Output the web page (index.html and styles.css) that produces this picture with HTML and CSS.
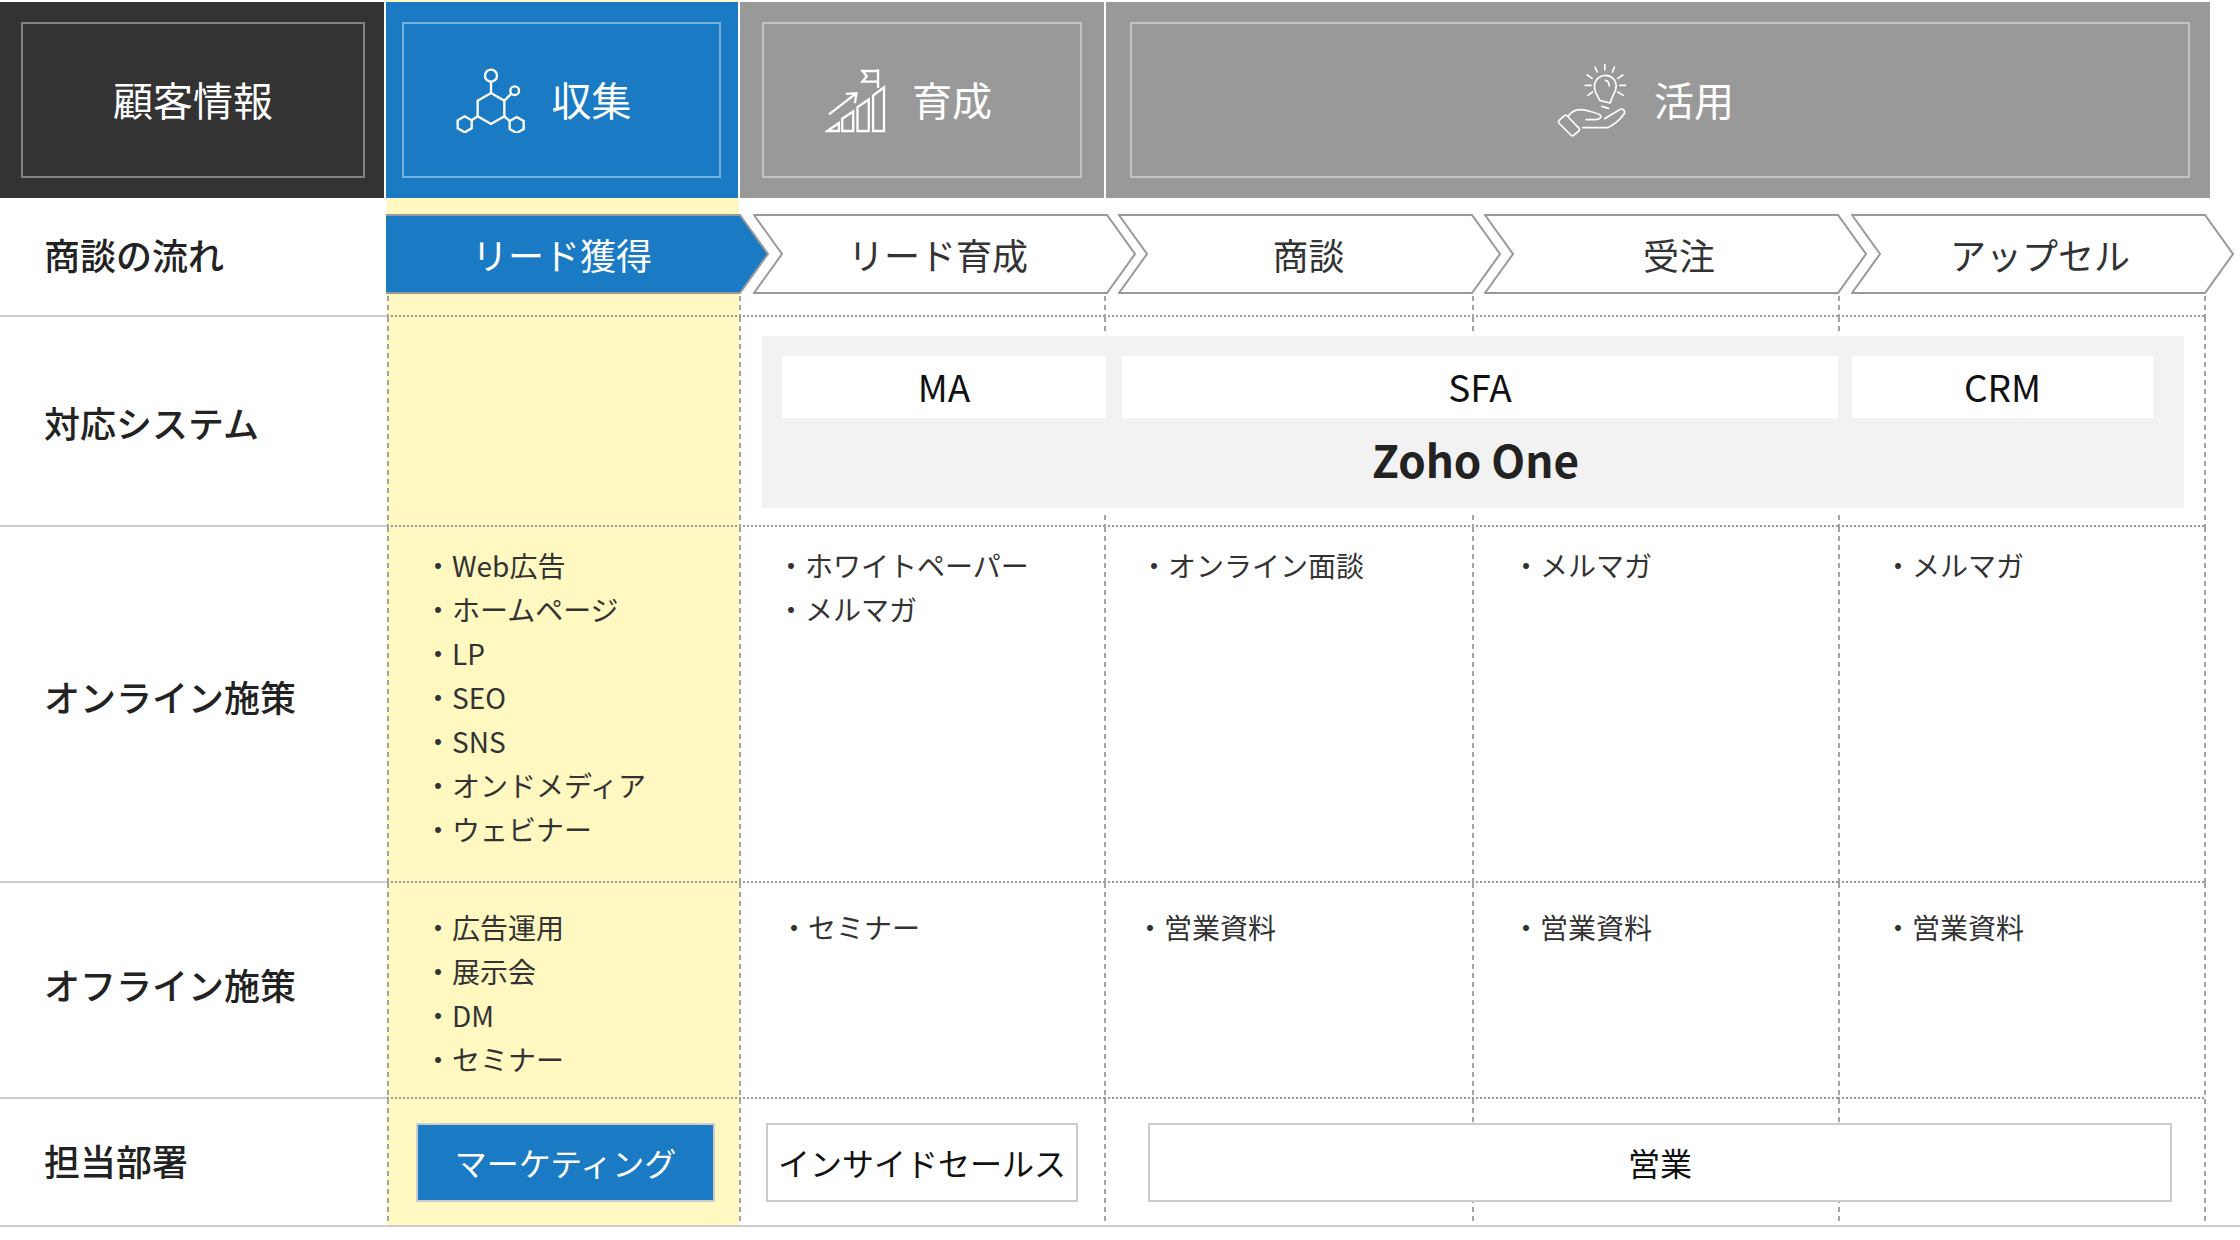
FILE: index.html
```html
<!DOCTYPE html>
<html lang="ja">
<head>
<meta charset="utf-8">
<title>顧客情報</title>
<link rel="stylesheet" href="styles.css">
</head>
<body>
<main class="page">
  <header class="stages">
    <div class="stage stage-dark"><div class="stage-box"><span class="stage-text">顧客情報</span></div></div>
    <div class="stage stage-blue"><div class="stage-box stage-box-icon">
      <svg class="icon icon-molecule" viewBox="45 50 210 195" aria-hidden="true">
        <path d="M150 125 190 148V195L150 218 110 195V148Z"/>
        <circle cx="150" cy="73" r="18"/><path d="M150 92V125"/>
        <circle cx="221" cy="118" r="13"/><path d="M190 148 211 127"/>
        <path d="M71 195 92 207V231L71 243 50 231V207ZM92 207 110 195"/>
        <path d="M227 197 248 209V233L227 245 206 233V209ZM206 209 190 195"/>
      </svg>
      <span class="stage-text">収集</span></div></div>
    <div class="stage stage-gray stage-nurture"><div class="stage-box stage-box-icon">
      <svg class="icon icon-chart" viewBox="40 50 190 200" aria-hidden="true">
        <path d="M200 56V112M200 61H153L166 77 153 93H200"/>
        <path d="M47 242 82 218V242ZM92 242V205L125 183V242ZM138 242V170L172 147V242ZM185 242V135L218 110V242Z"/>
        <path d="M52 192 135 128M103 130 135 128 130 158"/>
      </svg>
      <span class="stage-text">育成</span></div></div>
    <div class="stage stage-gray stage-use"><div class="stage-box stage-box-icon">
      <svg class="icon icon-hand" viewBox="35 38 215 225" aria-hidden="true">
        <path d="M165 150C160 135 148 125 150 105 152 85 168 75 183 75 200 75 215 88 215 108 215 125 203 135 197 158ZM183 90C190 92 194 98 194 106M172 168 192 174"/>
        <path d="M181 43V58M152 50 158 65M210 50 204 65M128 74 143 84M235 74 220 84M122 105H140M243 105H226M130 135 144 125M236 135 220 125"/>
        <path d="M44 210 60 196Q64 193 68 197L104 234Q107 238 103 242L87 255Q83 258 79 254L43 218Q40 214 44 210Z"/>
        <path d="M72 196C85 178 105 175 125 180 140 185 160 187 168 195 172 205 160 208 150 208H125M180 205 225 178C235 172 245 182 238 192 225 210 205 225 190 232H115"/>
      </svg>
      <span class="stage-text">活用</span></div></div>
  </header>

  <section class="row row-flow">
    <div class="label label-flow">商談の流れ</div>
    <div class="flow-tint"></div>
    <div class="arrows">
      <div class="arrow arrow-lead">
        <svg class="arrow-shape" viewBox="0 0 384 80" aria-hidden="true"><polygon class="arrow-fill" points="0,1 354,1 382,40 354,79 0,79"/><polyline class="arrow-line" points="0,1 354,1 382,40 354,79 0,79"/></svg>
        <span class="arrow-text">リード獲得</span>
      </div>
      <div class="arrow arrow-nurture">
        <svg class="arrow-shape" viewBox="0 0 384 80" aria-hidden="true"><polygon class="arrow-line" points="1,1 354,1 382,40 354,79 1,79 29,40"/></svg>
        <span class="arrow-text">リード育成</span>
      </div>
      <div class="arrow arrow-talk">
        <svg class="arrow-shape" viewBox="0 0 384 80" aria-hidden="true"><polygon class="arrow-line" points="1,1 354,1 382,40 354,79 1,79 29,40"/></svg>
        <span class="arrow-text">商談</span>
      </div>
      <div class="arrow arrow-order">
        <svg class="arrow-shape" viewBox="0 0 384 80" aria-hidden="true"><polygon class="arrow-line" points="1,1 354,1 382,40 354,79 1,79 29,40"/></svg>
        <span class="arrow-text">受注</span>
      </div>
      <div class="arrow arrow-upsell">
        <svg class="arrow-shape" viewBox="0 0 384 80" aria-hidden="true"><polygon class="arrow-line" points="1,1 354,1 382,40 354,79 1,79 29,40"/></svg>
        <span class="arrow-text">アップセル</span>
      </div>
    </div>
    <div class="cell c1 tint"></div><div class="cell c2"></div><div class="cell c3"></div><div class="cell c4"></div><div class="cell c5"></div>
  </section>

  <section class="row row-system">
    <div class="label">対応システム</div>
    <div class="cell c1 tint"></div><div class="cell c2"></div><div class="cell c3"></div><div class="cell c4"></div><div class="cell c5"></div>
    <div class="panel">
      <div class="tabs">
        <div class="tab tab-ma">MA</div>
        <div class="tab tab-sfa">SFA</div>
        <div class="tab tab-crm">CRM</div>
      </div>
      <div class="panel-title">Zoho One</div>
    </div>
  </section>

  <section class="row row-online">
    <div class="label">オンライン施策</div>
    <ul class="cell c1 tint list">
      <li>・Web広告</li><li>・ホームページ</li><li>・LP</li><li>・SEO</li><li>・SNS</li><li>・オンドメディア</li><li>・ウェビナー</li>
    </ul>
    <ul class="cell c2 list"><li>・ホワイトペーパー</li><li>・メルマガ</li></ul>
    <ul class="cell c3 list"><li>・オンライン面談</li></ul>
    <ul class="cell c4 list"><li>・メルマガ</li></ul>
    <ul class="cell c5 list"><li>・メルマガ</li></ul>
  </section>

  <section class="row row-offline">
    <div class="label">オフライン施策</div>
    <ul class="cell c1 tint list"><li>・広告運用</li><li>・展示会</li><li>・DM</li><li>・セミナー</li></ul>
    <ul class="cell c2 list"><li>・セミナー</li></ul>
    <ul class="cell c3 list"><li>・営業資料</li></ul>
    <ul class="cell c4 list"><li>・営業資料</li></ul>
    <ul class="cell c5 list"><li>・営業資料</li></ul>
  </section>

  <section class="row row-owner">
    <div class="label">担当部署</div>
    <div class="cell c1 tint"></div><div class="cell c2"></div><div class="cell c3"></div><div class="cell c4"></div><div class="cell c5"></div>
    <div class="owner owner-marketing">マーケティング</div>
    <div class="owner owner-inside">インサイドセールス</div>
    <div class="owner owner-sales">営業</div>
  </section>
</main>
</body>
</html>
```

FILE: styles.css
```css
* {
  box-sizing: border-box;
}

html,
body {
  margin: 0;
  padding: 0;
  background: #fff;
}

body {
  font-family: "Noto Sans CJK JP", "Noto Sans", sans-serif;
  color: #333;
}

.page {
  width: 2240px;
  height: 1240px;
  overflow: hidden;
}

/* Stage header */
.stages {
  display: flex;
  gap: 2px;
  width: 2210px;
  height: 198px;
  padding-top: 2px;
}

.stage {
  display: flex;
  height: 196px;
  padding-top: 20px;
  padding-bottom: 20px;
}

.stage-dark {
  width: 384px;
  padding-left: 21px;
  padding-right: 19px;
  background: #333;
}

.stage-blue {
  width: 352px;
  padding-left: 16px;
  padding-right: 17px;
  background: #1a7ac4;
  position: relative;
}

.stage-blue::before {
  content: "";
  position: absolute;
  left: 0;
  right: 0;
  top: -2px;
  height: 2px;
  background: #fff8c0;
}

.stage-gray {
  background: #999;
}

.stage-nurture {
  width: 364px;
  padding-left: 22px;
  padding-right: 22px;
}

.stage-use {
  flex: 1;
  padding-left: 24px;
  padding-right: 20px;
}

.stage-box {
  flex: 1;
  display: flex;
  align-items: center;
  justify-content: center;
  border: 2px solid rgba(255, 255, 255, 0.4);
}

.stage-box-icon {
  gap: 26px;
  padding-right: 36px;
}

.stage-nurture .stage-box-icon {
  gap: 24px;
  padding-right: 27px;
}

.stage-use .stage-box-icon {
  padding-right: 30px;
}

.stage-text {
  font-size: 40px;
  line-height: 1;
  color: #fff;
  margin-top: -2px;
}

.icon {
  display: block;
  fill: none;
  stroke: #fff;
  stroke-width: 7;
  stroke-linejoin: miter;
}

.icon-molecule {
  width: 70px;
  height: 65px;
}

.icon-chart {
  width: 63px;
  height: 67px;
}

.icon-hand {
  width: 72px;
  height: 75px;
  stroke-width: 5;
  stroke-linecap: round;
  stroke-linejoin: round;
}

/* Table rows */
.row {
  display: grid;
  grid-template-columns: 387px 352px 365px 368px 366px 368px 1fr;
  grid-template-rows: 1fr;
}

.row-flow {
  height: 119px;
  grid-template-rows: 98px 21px;
}

.row-system {
  height: 210px;
}

.row-online {
  height: 356px;
}

.row-offline {
  height: 216px;
}

.row-owner {
  height: 128px;
  border-bottom: 2px solid #ccc;
}

.label {
  grid-column: 1;
  grid-row: 1;
  display: flex;
  align-items: center;
  padding-left: 44px;
  border-bottom: 2px solid #ccc;
  font-size: 36px;
  font-weight: 500;
  color: #222;
}

.label-flow {
  grid-row: 1 / 3;
  padding-bottom: 6px;
}

.row-system .label {
  padding-top: 2px;
}

.row-online .label {
  padding-bottom: 17px;
}

.row-offline .label {
  padding-bottom: 12px;
}

.row-owner .label {
  padding-bottom: 5px;
  border-bottom: 0;
}

.cell {
  grid-row: 1;
  margin: 0;
  background-image:
    repeating-linear-gradient(to bottom, #a3a3a3 0 5px, transparent 5px 9px),
    repeating-linear-gradient(to right, #999 0 2px, transparent 2px 4px);
  background-position: left top, left bottom;
  background-size: 2px 100%, 100% 2px;
  background-repeat: no-repeat;
}

.row-flow .cell {
  grid-row: 2;
}

.row-owner .cell {
  background-image: repeating-linear-gradient(to bottom, #a3a3a3 0 5px, transparent 5px 9px);
}

.c1 {
  grid-column: 2;
}

.c2 {
  grid-column: 3;
}

.c3 {
  grid-column: 4;
}

.c4 {
  grid-column: 5;
}

.c5 {
  grid-column: 6;
  border-right: 2px solid transparent;
  background-origin: border-box;
  background-clip: border-box;
  background-image:
    repeating-linear-gradient(to bottom, #a3a3a3 0 5px, transparent 5px 9px),
    repeating-linear-gradient(to bottom, #a3a3a3 0 5px, transparent 5px 9px),
    repeating-linear-gradient(to right, #999 0 2px, transparent 2px 4px);
  background-position: left top, right top, left bottom;
  background-size: 2px 100%, 2px 100%, 100% 2px;
}

.row-owner .c5 {
  background-image:
    repeating-linear-gradient(to bottom, #a3a3a3 0 5px, transparent 5px 9px),
    repeating-linear-gradient(to bottom, #a3a3a3 0 5px, transparent 5px 9px);
  background-position: left top, right top;
  background-size: 2px 100%, 2px 100%;
}

.tint {
  background-color: #fff8c0;
}

.flow-tint {
  grid-column: 2;
  grid-row: 1;
  background: #fff8c0;
}

/* Flow arrows */
.arrows {
  grid-column: 2 / -1;
  grid-row: 1;
  display: flex;
  margin-left: -1px;
  padding-top: 16px;
  height: 98px;
}

.arrow {
  display: grid;
  flex: none;
  width: 384px;
  height: 80px;
  margin-right: -17px;
}

.arrow-shape,
.arrow-text {
  grid-area: 1 / 1;
}

.arrow-shape {
  display: block;
  width: 384px;
  height: 80px;
}

.arrow-line {
  fill: #fff;
  stroke: #999;
  stroke-width: 2;
}

.arrow-fill {
  fill: #1a7ac4;
}

.arrow-lead .arrow-line {
  fill: none;
}

.arrow-text {
  display: flex;
  align-items: center;
  justify-content: center;
  font-size: 36px;
  color: #333;
}

.arrow-lead .arrow-text {
  color: #fff;
  padding-right: 32px;
}

.arrow-nurture {
  margin-right: -19px;
}

.arrow-nurture .arrow-text {
  padding-right: 14px;
}

.arrow-talk {
  margin-right: -18px;
}

.arrow-talk .arrow-text {
  padding-right: 3px;
}

.arrow-order .arrow-text {
  padding-left: 6px;
}

.arrow-upsell .arrow-text {
  padding-right: 6px;
}

/* System panel */
.panel {
  grid-column: 3 / 7;
  grid-row: 1;
  align-self: start;
  height: 172px;
  margin: 19px 22px 0 23px;
  padding: 20px 20px 0;
  background: #f2f2f2;
  box-shadow: 0 0 0 4px #fff;
}

.tabs {
  display: flex;
}

.tab {
  display: flex;
  align-items: center;
  justify-content: center;
  height: 62px;
  padding-bottom: 2px;
  background: #fff;
  font-size: 37px;
  color: #111;
}

.tab-ma {
  width: 324px;
  margin-right: 16px;
}

.tab-sfa {
  width: 716px;
  margin-right: 14px;
}

.tab-crm {
  width: 301px;
}

.panel-title {
  margin-top: 9px;
  padding-left: 5px;
  text-align: center;
  font-size: 44px;
  line-height: 64px;
  font-weight: 700;
  color: #222;
}

/* Lists */
.list {
  list-style: none;
  padding: 0;
  font-size: 28px;
  line-height: 44px;
  color: #333;
}

.row-online .list {
  padding-top: 16px;
}

.row-offline .list {
  padding-top: 22px;
}

.list.c1 {
  padding-left: 37px;
}

.list.c2 {
  padding-left: 38px;
}

.row-online .list.c3 {
  padding-left: 36px;
}

.row-offline .list.c3 {
  padding-left: 32px;
}

.row-online .list.c4 {
  padding-left: 40px;
}

.row-offline .list.c4 {
  padding-left: 40px;
}

.list.c5 {
  padding-left: 46px;
}

.row-offline .list.c2 {
  padding-left: 41px;
}

/* Department boxes */
.owner {
  grid-row: 1;
  align-self: start;
  display: flex;
  align-items: center;
  justify-content: center;
  height: 79px;
  margin-top: 24px;
  padding-bottom: 2px;
  background: #fff;
  border: 2px solid #ccc;
  font-size: 32px;
  color: #111;
  white-space: nowrap;
}

.owner-marketing {
  grid-column: 2;
  margin-left: 29px;
  margin-right: 24px;
  background: #1a7ac4;
  color: #fff;
}

.owner-inside {
  grid-column: 3;
  margin-left: 27px;
  margin-right: 26px;
}

.owner-sales {
  grid-column: 4 / 7;
  margin-left: 44px;
  margin-right: 34px;
}
```
